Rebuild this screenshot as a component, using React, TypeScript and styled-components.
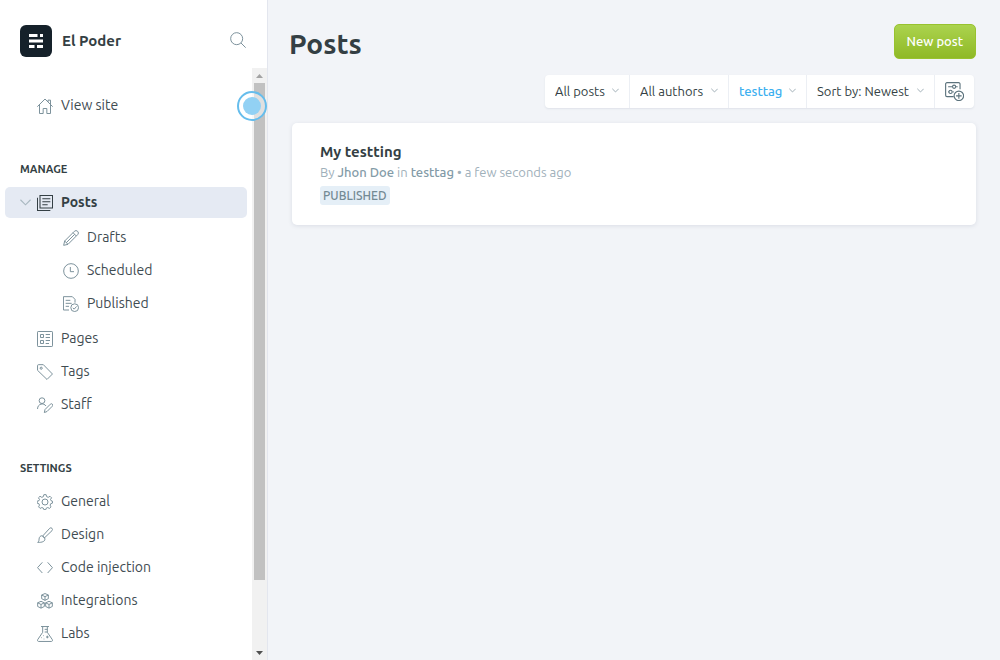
import React from "react";
import styled, { createGlobalStyle, css } from "styled-components";

const fontStack = `Ubuntu, "Noto Sans", "Open Sans", sans-serif`;

const GlobalStyle = createGlobalStyle`
  *, *::before, *::after { box-sizing: border-box; }
  body { margin: 0; background: #f2f4f8; color: #343f44; font-family: ${fontStack}; font-size: 14px; }
  a { color: inherit; text-decoration: none; }
  button, select { font: inherit; color: inherit; cursor: pointer; }
`;

const Shell = styled.div`
  display: flex;
  min-height: 100vh;
`;

const Sidebar = styled.aside`
  display: flex;
  flex-direction: column;
  flex: none;
  width: 268px;
  height: 100vh;
  background: #fff;
  border-right: 1px solid #e3e6ee;
`;

const SidebarHeader = styled.header`
  display: flex;
  align-items: center;
  gap: 10px;
  flex: none;
  padding: 25px 21px 11px 20px;
`;

const SiteName = styled.span`
  flex: 1;
  font-size: 15px;
  font-weight: 700;
  line-height: 20px;
`;

const SearchButton = styled.button`
  display: flex;
  padding: 0 0 2px;
  border: 0;
  background: none;
  color: #738a94;
`;

const ScrollArea = styled.div`
  position: relative;
  display: flex;
  flex: 1;
  min-height: 0;
`;

const Nav = styled.nav`
  flex: 1;
  overflow: hidden;
  padding: 20px 5px 0;
`;

const NavList = styled.ul`
  margin: 0;
  padding: 0;
  list-style: none;
`;

const SubList = styled(NavList)`
  padding: 2px 0 2px 26px;
`;

const SectionTitle = styled.h2`
  margin: 0;
  padding: 39px 15px 7px;
  font-size: 11px;
  font-weight: 600;
  line-height: 18px;
  text-transform: uppercase;
`;

const NavLink = styled.a<{ $active?: boolean }>`
  display: flex;
  align-items: center;
  gap: 8px;
  height: 33px;
  padding-left: 32px;
  line-height: 20px;
  color: #3f4c52;

  svg { position: relative; top: 1px; flex: none; color: #738a94; }

  ${({ $active }) =>
    $active &&
    css`
      height: 31px;
      margin-top: 2px;
      padding: 0 0 2px 15px;
      border-radius: 5px;
      background: #e5eaf3;
      color: #343f44;
      font-weight: 700;

      svg { color: #343f44; }
      svg:first-child { width: 11px; margin-right: -2px; color: #a9b8c0; }
    `}
`;

const ScrollTrack = styled.div`
  display: flex;
  flex-direction: column;
  flex: none;
  width: 15px;
  background: #f1f1f1;
`;

const ScrollArrow = styled.span<{ $down?: boolean }>`
  display: flex;
  align-items: center;
  justify-content: center;
  height: 15px;
  color: ${({ $down }) => ($down ? "#505050" : "#a3a3a3")};
`;

const ScrollRail = styled.div`
  flex: 1;
  padding: 0 2px;
`;

const ScrollThumb = styled.div`
  height: 88.4%;
  background: #c1c1c1;
`;

const ClickMarker = styled.span`
  position: absolute;
  top: 23px;
  right: 0;
  display: flex;
  align-items: center;
  justify-content: center;
  width: 30px;
  height: 30px;
  border: 2px solid #66bdec;
  border-radius: 50%;
  background: rgba(255, 255, 255, 0.5);

  &::before {
    content: "";
    width: 18px;
    height: 18px;
    border-radius: 50%;
    background: #92d1f4;
  }
`;

const Main = styled.main`
  flex: 1;
  min-width: 0;
  padding: 24px 24px 24px 21px;
`;

const PageHeader = styled.header`
  display: flex;
  align-items: center;
  justify-content: space-between;
`;

const PageTitle = styled.h1`
  margin: 0;
  font-size: 28px;
  font-weight: 700;
  line-height: 36px;
`;

const PrimaryButton = styled.button`
  height: 35px;
  margin-bottom: 5px;
  padding: 0 12px 2px;
  border: 1px solid #98c22f;
  border-radius: 5px;
  background: linear-gradient(#abd34e, #8fb926);
  color: #fff;
  font-size: 13px;
  font-weight: 500;
`;

const FilterBar = styled.div`
  display: flex;
  justify-content: flex-end;
  padding: 11px 2px 15px 0;
`;

const FilterGroup = styled.div`
  display: flex;
  height: 33px;
  border-radius: 4px;
  background: #fff;
  box-shadow: 0 1px 2px rgba(60, 80, 110, 0.1);
`;

const Filter = styled.label<{ $width: number; $selected?: boolean }>`
  display: flex;
  align-items: center;
  justify-content: space-between;
  width: ${({ $width }) => $width}px;
  padding: 0 10px 2px;
  border-right: 1px solid #eceff4;
  color: ${({ $selected }) => ($selected ? "#3eb0ef" : "#343f44")};
  font-weight: ${({ $selected }) => ($selected ? 500 : 400)};

  svg { flex: none; color: #93a4ad; }
`;

const FilterSelect = styled.select`
  appearance: none;
  padding: 0;
  border: 0;
  background: none;
  font-size: 13px;
  line-height: 20px;
`;

const SaveViewButton = styled.button`
  display: flex;
  align-items: center;
  justify-content: center;
  width: 39px;
  padding: 0;
  border: 0;
  background: none;
  color: #5b727c;
`;

const PostList = styled.ul`
  margin: 0 0 0 3px;
  padding: 0;
  list-style: none;
  border-radius: 5px;
  background: #fff;
  box-shadow: 0 1px 4px rgba(60, 80, 110, 0.13);
`;

const PostItem = styled.li`
  padding: 19px 28px 20px;
`;

const PostTitle = styled.h3`
  margin: 0;
  font-size: 15px;
  font-weight: 700;
  line-height: 20px;
`;

const PostMeta = styled.p`
  margin: 0;
  color: #9fb0ba;
  font-size: 13px;
  line-height: 20px;

  strong { color: #839ba7; font-weight: 500; }
`;

const StatusBadge = styled.span`
  display: inline-block;
  margin-top: 4px;
  padding: 0 3px;
  border-radius: 3px;
  background: #e5eff7;
  color: #738a94;
  font-size: 12px;
  font-weight: 500;
  line-height: 19px;
  text-transform: uppercase;
  vertical-align: top;
`;

const glyphs = {
  home: <path d="M.5 13 12 1.500 23.500 13M3.750 10v13.250h5.500v-7.500h5.500v7.500h5.500V10M16.500 6V3.200h3.750V9.500" />,
  posts: <path d="M4.500.7h18.800v18.800H4.500zM.7 4v19.300H20M8 5.500h12M8 10h12M8 14.500h8" />,
  pencil: <path d="M1 23l1.500-6.500L17 2a3 3 0 0 1 5 5L7.500 21.500zM2.500 16.500l5 5M15 4l5 5M5 19 17.500 6.500" />,
  clock: <><circle cx="12" cy="12" r="11" /><path d="M11 6v7h5.500" /></>,
  published: <><path d="M9 21H.7V1H14l4 4v5M4 6.500h7M4 11h9M4 15.500h5" /><circle cx="17.500" cy="17.500" r="5.800" /><path d="m14.800 17.700 2 2 3.500-4" /></>,
  pages: <><rect x=".75" y=".75" width="22.500" height="22.500" rx="1" /><path d="M5.250 5.250h4.500v4.500h-4.500zM5.250 14.250h4.500v4.500h-4.500zM13 5.250h6.500M13 9.750h6.500M13 14.250h6.500M13 18.750h5" /></>,
  tag: <><path d="M.8 2.500v7L15 23.200l8.200-8.200L9.500 1H2.300A1.500 1.500 0 0 0 .8 2.500z" /><circle cx="6.300" cy="6.300" r="1.600" /></>,
  staff: <><circle cx="7.500" cy="5.500" r="4.300" /><path d="M.8 18c0-8.500 9.700-9.500 12.700-4.500M11 23.300l1-4.500 8-8a2 2 0 0 1 3 3l-8 8z" /></>,
  gear: <><circle cx="12" cy="12" r="4.500" /><path d="M9.500 4 10.300 1h3.400l.8 3 2.300 1 2.700-1.600 2.300 2.300L20.200 8.400l.8 1.600 2.200.8v2.900l-2.600.8-.9 2.200 1.300 2.600-2.300 2.300-2.600-1.300-2.200.9-.7 2.300h-2.900l-.8-2.300-2.200-.9-2.600 1.300-2.300-2.300 1.300-2.600-.9-2.200-2.600-.8v-2.900L3 10l.8-1.600L2.200 5.700l2.300-2.300L7.200 5z" /></>,
  brush: <path d="M8.500 13.500 19 2a2.400 2.400 0 0 1 3.500 3.500L11 16.500zM8.500 13.500l3 3c2 5-4 7-10.500 6.500 3-2 1.500-4 2.500-7 1-2.500 3.500-3.500 5-2.500z" />,
  code: <path d="M8 3.500.8 11.500l7.200 8M16 3.500l7.200 8-7.200 8" />,
  blocks: <path d="m12 .8 5 2.200v5.500l-5 2.500-5-2.500V3zM7 3l5 2.500L17 3M12 5.500V11M6 12.500l5 2.200v5.500l-5 2.500-5-2.500v-5.500zM1 14.700l5 2.500 5-2.500M6 17.200v5.500M18 12.500l5 2.200v5.500l-5 2.500-5-2.500v-5.500zM13 14.700l5 2.500 5-2.500M18 17.200v5.500" />,
  flask: <path d="M6 .8h12M8.500.8v8.700L1 20.500c-.8 1.500 0 2.700 1.500 2.700h19c1.500 0 2.300-1.200 1.500-2.700L15.500 9.500V.8M11.500 5h4M11.500 9h4M6 17.500h1M10 19.500h1M9 14.500h1M13.500 16.500h4M15.500 14.500v4" />,
  search: <><circle cx="10" cy="10" r="9" /><path d="m16.500 16.500 7 7" /></>,
  chevron: <path d="m1 6 11 11L23 6" />,
  saveView: <><path d="M11 18.500H2.500A1.700 1.700 0 0 1 .8 16.800V2.500A1.700 1.700 0 0 1 2.500.8h14.800A1.700 1.700 0 0 1 19 2.500V9M4 6h5M14 6h2M4 12.500h1M9.500 12.500H11" /><circle cx="11.500" cy="6" r="2" /><circle cx="7" cy="12.500" r="2" /><circle cx="17.500" cy="17.500" r="6" /><path d="M17.500 14v7M14 17.500h7" /></>,
};

type GlyphName = keyof typeof glyphs;

function Icon({ name, size = 16, stroke = 1.4 }: { name: GlyphName; size?: number; stroke?: number }) {
  return (
    <svg width={size} height={size} viewBox="0 0 24 24" fill="none" stroke="currentColor" strokeWidth={stroke} aria-hidden="true">
      {glyphs[name]}
    </svg>
  );
}

function Logo() {
  return (
    <svg width="32" height="32" viewBox="0 0 32 32" role="img" aria-label="El Poder logo">
      <rect width="32" height="32" rx="6" fill="#15212a" />
      <path fill="#fff" d="M9 9h8.500v3H9zM20 9h3v3h-3zM9 20h5.500v3H9zM17 20h6v3h-6z" />
      <path fill="#fff" d="M9 14.500h14v3H9z" />
    </svg>
  );
}

function Item({ icon, children }: { icon: GlyphName; children: string }) {
  return (
    <li>
      <NavLink href="#">
        <Icon name={icon} />
        {children}
      </NavLink>
    </li>
  );
}

const filters = [
  { name: "Post type", value: "All posts", width: 85 },
  { name: "Author", value: "All authors", width: 99 },
  { name: "Tag", value: "testtag", width: 78, selected: true },
  { name: "Order", value: "Sort by: Newest", width: 128 },
];

export default function App() {
  return (
    <Shell>
      <GlobalStyle />
      <Sidebar>
        <SidebarHeader>
          <Logo />
          <SiteName>El Poder</SiteName>
          <SearchButton aria-label="Search">
            <Icon name="search" />
          </SearchButton>
        </SidebarHeader>
        <ScrollArea>
          <Nav>
            <NavList>
              <Item icon="home">View site</Item>
            </NavList>
            <SectionTitle>Manage</SectionTitle>
            <NavList>
              <li>
                <NavLink href="#" $active aria-current="page">
                  <Icon name="chevron" size={11} stroke={2.4} />
                  <Icon name="posts" stroke={1.6} />
                  Posts
                </NavLink>
                <SubList>
                  <Item icon="pencil">Drafts</Item>
                  <Item icon="clock">Scheduled</Item>
                  <Item icon="published">Published</Item>
                </SubList>
              </li>
              <Item icon="pages">Pages</Item>
              <Item icon="tag">Tags</Item>
              <Item icon="staff">Staff</Item>
            </NavList>
            <SectionTitle>Settings</SectionTitle>
            <NavList>
              <Item icon="gear">General</Item>
              <Item icon="brush">Design</Item>
              <Item icon="code">Code injection</Item>
              <Item icon="blocks">Integrations</Item>
              <Item icon="flask">Labs</Item>
            </NavList>
          </Nav>
          <ScrollTrack aria-hidden="true">
            <ScrollArrow>
              <svg width="7" height="4" viewBox="0 0 7 4"><path fill="currentColor" d="M0 4 3.500 0 7 4z" /></svg>
            </ScrollArrow>
            <ScrollRail>
              <ScrollThumb />
            </ScrollRail>
            <ScrollArrow $down>
              <svg width="7" height="4" viewBox="0 0 7 4"><path fill="currentColor" d="M0 0 3.500 4 7 0z" /></svg>
            </ScrollArrow>
          </ScrollTrack>
          <ClickMarker aria-hidden="true" />
        </ScrollArea>
      </Sidebar>
      <Main>
        <PageHeader>
          <PageTitle>Posts</PageTitle>
          <PrimaryButton>New post</PrimaryButton>
        </PageHeader>
        <FilterBar>
          <FilterGroup>
            {filters.map((f) => (
              <Filter key={f.name} $width={f.width} $selected={f.selected}>
                <FilterSelect aria-label={f.name}>
                  <option>{f.value}</option>
                </FilterSelect>
                <Icon name="chevron" size={7} stroke={3} />
              </Filter>
            ))}
            <SaveViewButton aria-label="Save view">
              <Icon name="saveView" size={19} />
            </SaveViewButton>
          </FilterGroup>
        </FilterBar>
        <PostList>
          <PostItem>
            <PostTitle>My testting</PostTitle>
            <PostMeta>
              By <strong>Jhon Doe</strong> in <strong>testtag</strong> • a few seconds ago
            </PostMeta>
            <StatusBadge>Published</StatusBadge>
          </PostItem>
        </PostList>
      </Main>
    </Shell>
  );
}
